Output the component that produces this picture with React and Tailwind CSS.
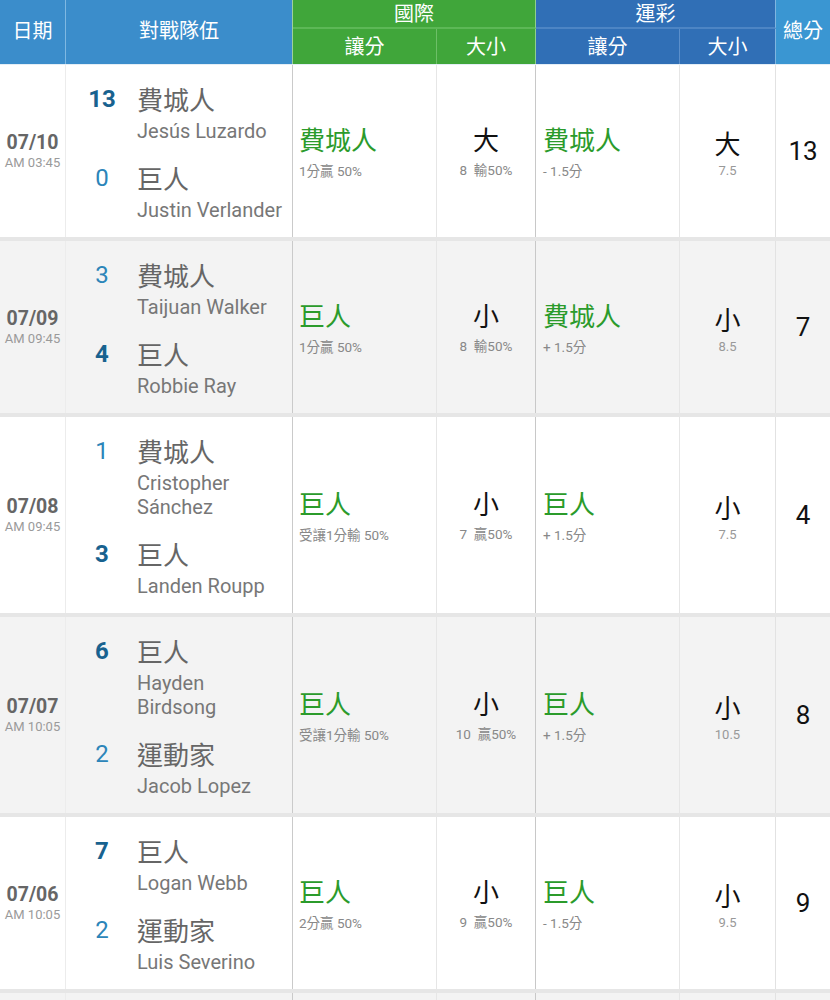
const games = [
  {
    date: '07/10', time: 'AM 03:45',
    teams: [
      { score: 13, win: true, name: '費城人', pitcher: ['Jesús Luzardo'] },
      { score: 0, win: false, name: '巨人', pitcher: ['Justin Verlander'] },
    ],
    intlSpread: { team: '費城人', note: '1分贏 50%' },
    intlTotal: { pick: '大', note: '8  輸50%' },
    lotSpread: { team: '費城人', note: '- 1.5分' },
    lotTotal: { pick: '大', note: '7.5' },
    total: 13,
  },
  {
    date: '07/09', time: 'AM 09:45',
    teams: [
      { score: 3, win: false, name: '費城人', pitcher: ['Taijuan Walker'] },
      { score: 4, win: true, name: '巨人', pitcher: ['Robbie Ray'] },
    ],
    intlSpread: { team: '巨人', note: '1分贏 50%' },
    intlTotal: { pick: '小', note: '8  輸50%' },
    lotSpread: { team: '費城人', note: '+ 1.5分' },
    lotTotal: { pick: '小', note: '8.5' },
    total: 7,
  },
  {
    date: '07/08', time: 'AM 09:45',
    teams: [
      { score: 1, win: false, name: '費城人', pitcher: ['Cristopher', 'Sánchez'] },
      { score: 3, win: true, name: '巨人', pitcher: ['Landen Roupp'] },
    ],
    intlSpread: { team: '巨人', note: '受讓1分輸 50%' },
    intlTotal: { pick: '小', note: '7  贏50%' },
    lotSpread: { team: '巨人', note: '+ 1.5分' },
    lotTotal: { pick: '小', note: '7.5' },
    total: 4,
  },
  {
    date: '07/07', time: 'AM 10:05',
    teams: [
      { score: 6, win: true, name: '巨人', pitcher: ['Hayden', 'Birdsong'] },
      { score: 2, win: false, name: '運動家', pitcher: ['Jacob Lopez'] },
    ],
    intlSpread: { team: '巨人', note: '受讓1分輸 50%' },
    intlTotal: { pick: '小', note: '10  贏50%' },
    lotSpread: { team: '巨人', note: '+ 1.5分' },
    lotTotal: { pick: '小', note: '10.5' },
    total: 8,
  },
  {
    date: '07/06', time: 'AM 10:05',
    teams: [
      { score: 7, win: true, name: '巨人', pitcher: ['Logan Webb'] },
      { score: 2, win: false, name: '運動家', pitcher: ['Luis Severino'] },
    ],
    intlSpread: { team: '巨人', note: '2分贏 50%' },
    intlTotal: { pick: '小', note: '9  贏50%' },
    lotSpread: { team: '巨人', note: '- 1.5分' },
    lotTotal: { pick: '小', note: '9.5' },
    total: 9,
  },
]

const cols = 'grid grid-cols-[66px_227px_144px_99px_144px_96px_54px]'
const cjk = "font-['Roboto','Noto_Sans_CJK_TC',sans-serif]"

function Header() {
  return (
    <div className={`${cols} grid-rows-[29px_35px] text-white text-[20px] border-b border-[#e4eef6] ${cjk}`}>
      <div className="row-span-2 flex items-center justify-center pb-[2px] bg-[#3b8dcb] border-r border-[#7fb8e2]">日期</div>
      <div className="row-span-2 flex items-center justify-center pb-[2px] bg-[#3b8dcb] border-r border-[#9fd09b]">對戰隊伍</div>
      <div className="col-span-2 flex items-center justify-center bg-[#40a63a] border-b-2 border-[#5cb856] border-r border-r-[#8fcf8a] leading-none">國際</div>
      <div className="col-span-2 flex items-center justify-center bg-[#306fb6] border-b-2 border-[#4d85c4] border-r border-r-[#7fb5e0] leading-none">運彩</div>
      <div className="row-span-2 col-start-7 row-start-1 flex items-center justify-center pb-[2px] bg-[#3a96d2]">總分</div>
      <div className="flex items-center justify-center bg-[#40a63a] border-r border-[#6dbf67]">讓分</div>
      <div className="flex items-center justify-center bg-[#40a63a] border-r border-[#8fcf8a]">大小</div>
      <div className="flex items-center justify-center bg-[#306fb6] border-r border-[#5b8fcb]">讓分</div>
      <div className="flex items-center justify-center bg-[#306fb6] border-r border-[#7fb5e0]">大小</div>
    </div>
  )
}

function TeamLine({ team, first }) {
  return (
    <div className={first ? 'flex' : 'flex mt-[19px]'}>
      <div
        className={`w-[48px] text-center text-[24px] leading-[32px] ${
          team.win ? 'font-bold text-[#18628f]' : 'text-[#2c85b9]'
        }`}
      >
        {team.score}
      </div>
      <div className="ml-[11px]">
        <div className="text-[26px] leading-[36px] text-[#666]">{team.name}</div>
        {team.pitcher.map(line => (
          <div key={line} className="text-[20px] leading-[24px] text-[#777] whitespace-nowrap">{line}</div>
        ))}
      </div>
    </div>
  )
}

function GameRow({ game, index }) {
  const bg = index % 2 === 0 ? 'bg-white' : 'bg-[#f3f3f3]'
  return (
    <div className={`${cols} ${bg} ${index > 0 ? 'border-t-4 border-[#e6e6e6]' : ''} ${cjk}`}>
      {/* date */}
      <div className="flex flex-col items-center justify-center border-r border-[#ececec]">
        <div className="text-[19.5px] leading-[22px] font-bold text-[#666]">{game.date}</div>
        <div className="text-[13px] leading-[17px] text-[#9a9a9a]">{game.time}</div>
      </div>

      {/* teams */}
      <div className="pl-[12px] pt-[18px] pb-[15px] border-r border-[#cacaca]">
        <TeamLine team={game.teams[0]} first />
        <TeamLine team={game.teams[1]} />
      </div>

      {/* 國際 */}
      <div className="flex flex-col justify-center pl-[6px] pt-[2px] border-r border-[#e6e6e6]">
        <div className="text-[26px] leading-[34px] text-[#2b9b2b]">{game.intlSpread.team}</div>
        <div className="mt-[3px] text-[13.5px] leading-[20px] text-[#888] whitespace-pre">{game.intlSpread.note}</div>
      </div>
      <div className="flex flex-col items-center justify-center pt-[2px] border-r border-[#c8c8c8]">
        <div className="text-[26px] leading-[34px] text-[#111]">{game.intlTotal.pick}</div>
        <div className="mt-[2px] text-[13.5px] leading-[20px] text-[#888] whitespace-pre">{game.intlTotal.note}</div>
      </div>

      {/* 運彩 */}
      <div className="flex flex-col justify-center pl-[7px] pt-[2px] border-r border-[#e6e6e6]">
        <div className="text-[26px] leading-[34px] text-[#2b9b2b]">{game.lotSpread.team}</div>
        <div className="mt-[3px] text-[13.5px] leading-[20px] text-[#888]">{game.lotSpread.note}</div>
      </div>
      <div className="flex flex-col items-center justify-center pt-[6px] border-r border-[#e2e2e2]">
        <div className="text-[26px] leading-[34px] text-[#111]">{game.lotTotal.pick}</div>
        <div className="text-[13px] leading-[18px] text-[#999]">{game.lotTotal.note}</div>
      </div>

      {/* 總分 */}
      <div className="flex items-center justify-center text-[26px] text-[#111]">{game.total}</div>
    </div>
  )
}

export default function App() {
  return (
    <div className="w-[830px] h-[1000px] overflow-hidden bg-white">
      <Header />
      {games.map((g, i) => (
        <GameRow key={g.date} game={g} index={i} />
      ))}
      <div className={`${cols} h-[40px] bg-[#f3f3f3] border-t-4 border-[#e6e6e6]`}>
        <div className="border-r border-[#ececec]" />
        <div className="border-r border-[#cacaca]" />
        <div className="border-r border-[#e6e6e6]" />
        <div className="border-r border-[#c8c8c8]" />
        <div className="border-r border-[#e6e6e6]" />
        <div className="border-r border-[#e2e2e2]" />
        <div />
      </div>
    </div>
  )
}
